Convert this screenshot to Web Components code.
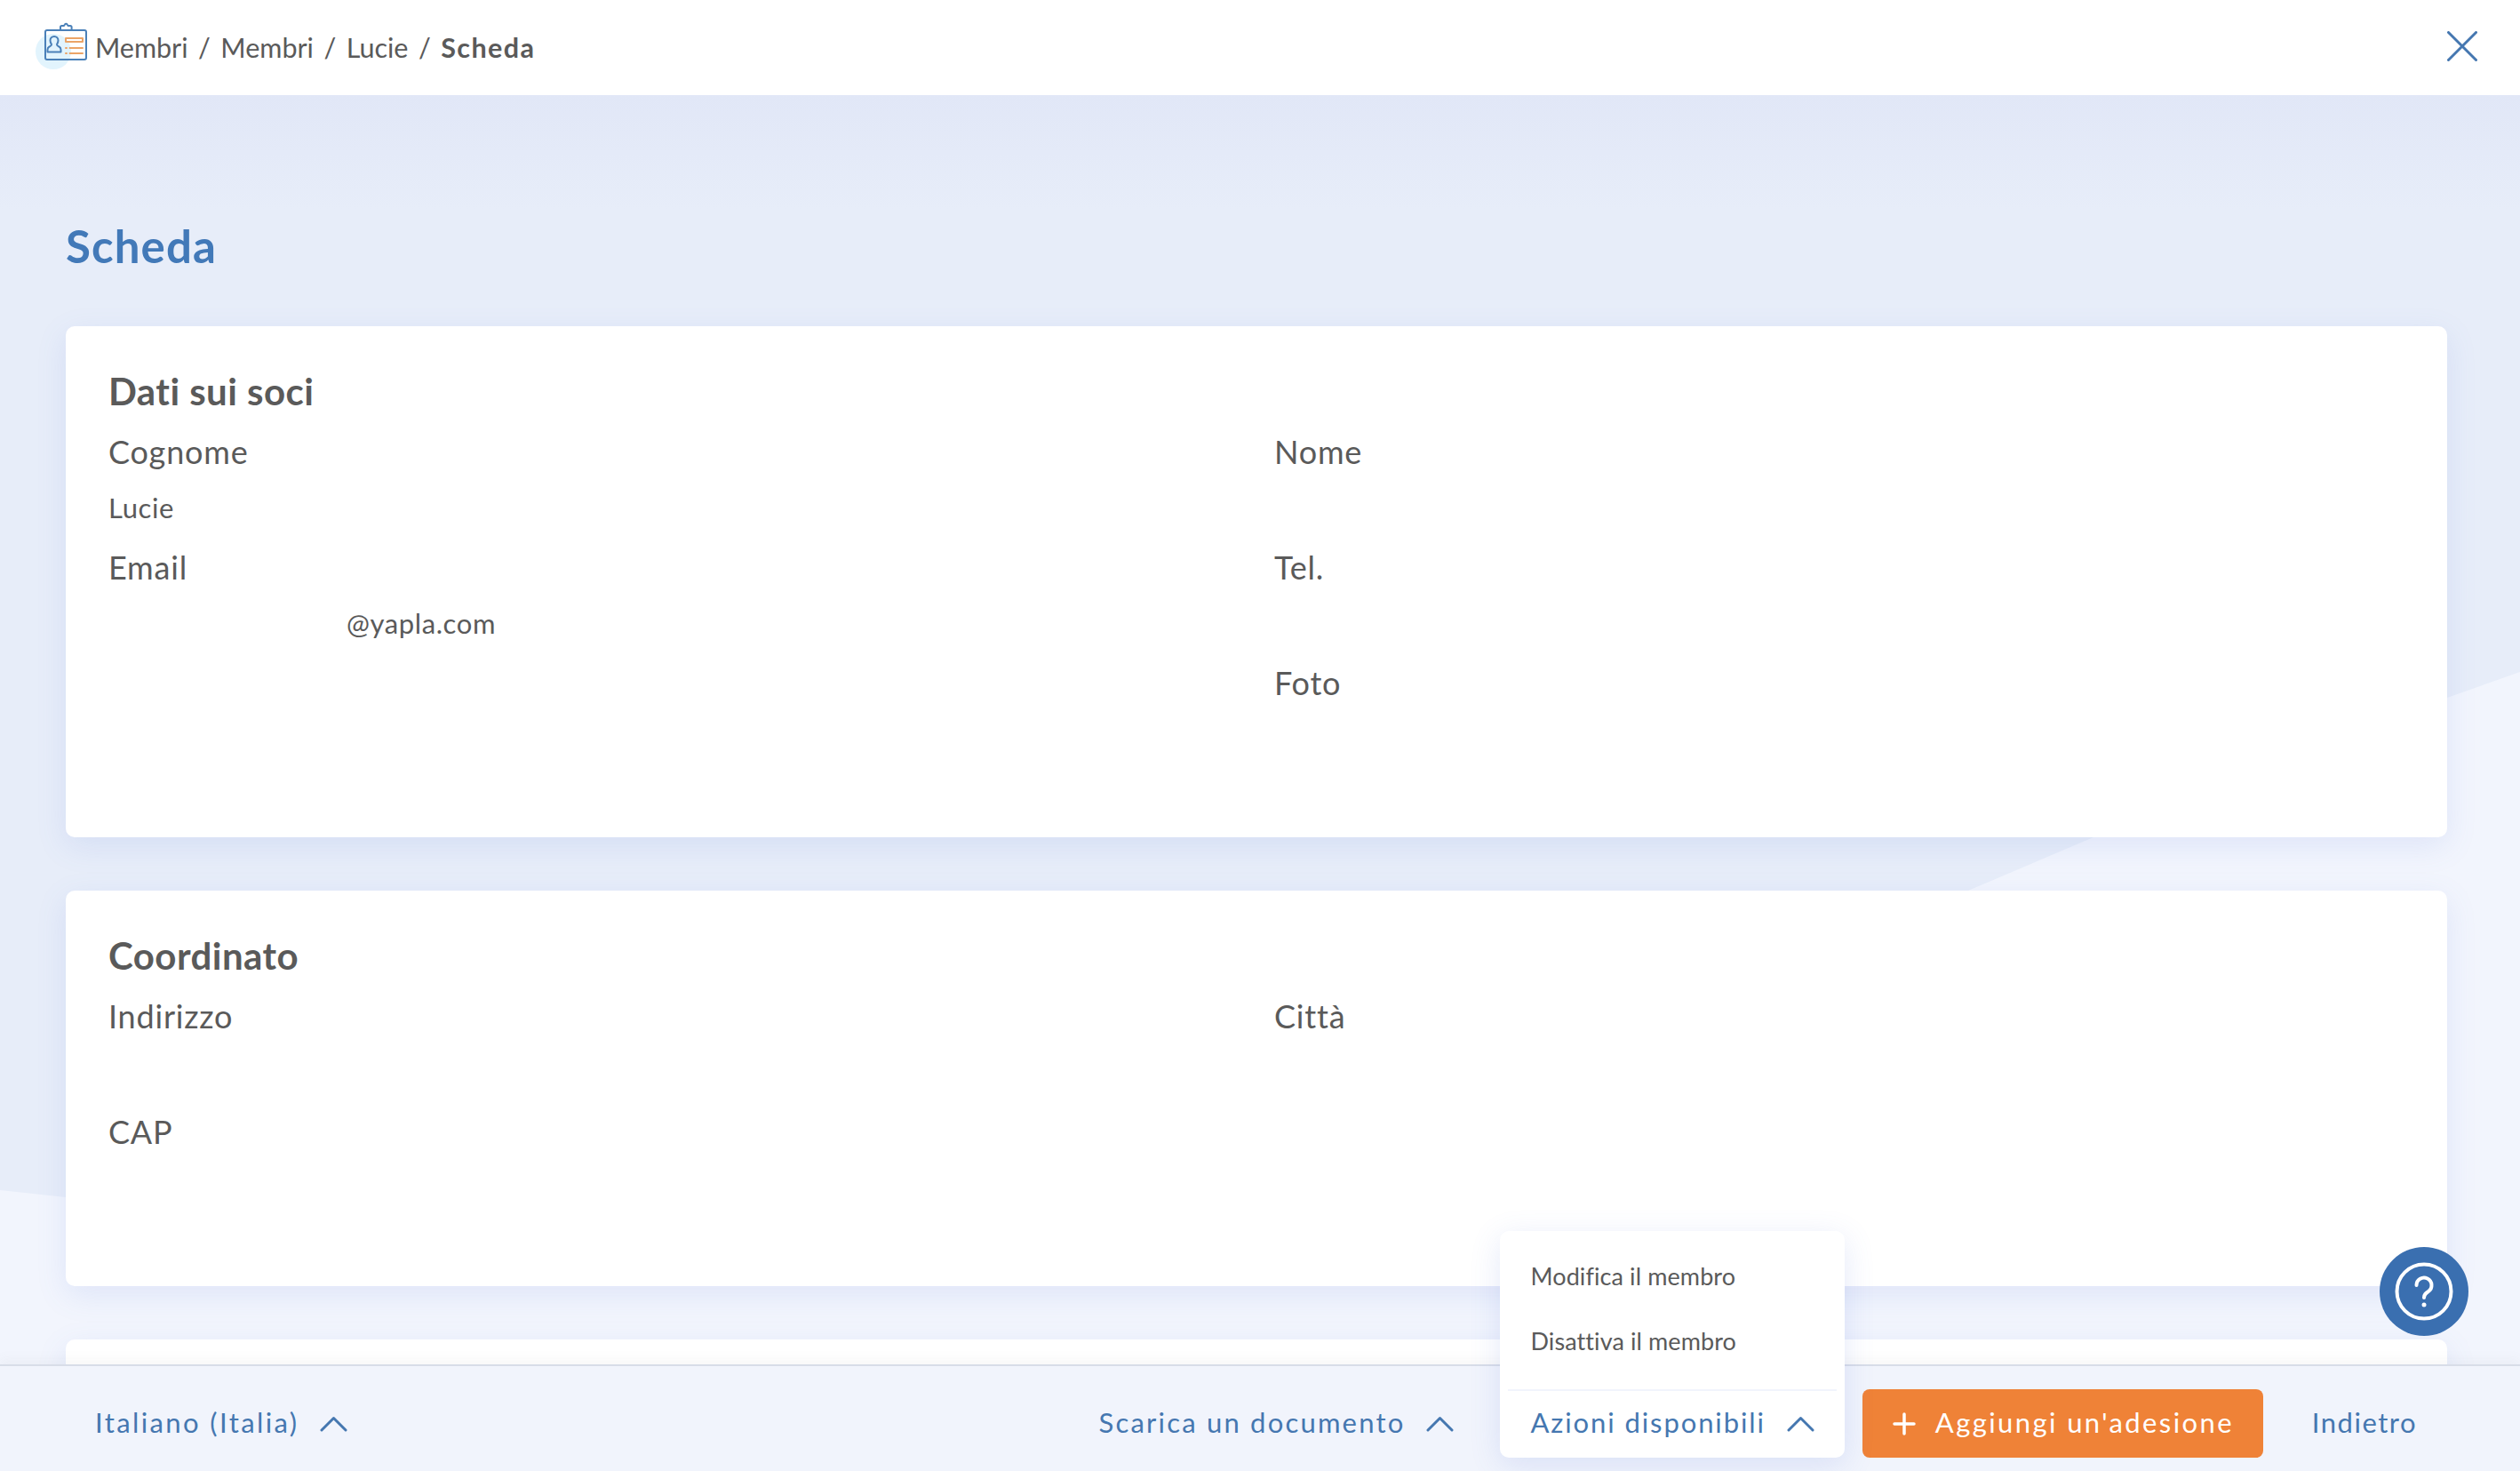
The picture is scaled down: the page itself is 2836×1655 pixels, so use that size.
<!DOCTYPE html>
<html lang="it">
<head>
<meta charset="utf-8">
<title>Scheda</title>
<style>
    html, body { margin: 0; height: 100%; overflow: hidden; }
    body { font-family: Lato, "Open Sans", sans-serif; color: #5a5a5a; }
</style>
</head>
<body>
<yp-app>
    <yp-topbar slot="top">
        <yp-crumb>Membri</yp-crumb>
        <yp-crumb>Membri</yp-crumb>
        <yp-crumb>Lucie</yp-crumb>
        <yp-crumb current>Scheda</yp-crumb>
    </yp-topbar>

    <yp-page heading="Scheda">
        <yp-card heading="Dati sui soci">
            <yp-field label="Cognome">Lucie</yp-field>
            <yp-field label="Nome"></yp-field>
            <yp-field label="Email" indent>@yapla.com</yp-field>
            <yp-field label="Tel."></yp-field>
            <yp-field label="Foto" second></yp-field>
        </yp-card>
        <yp-card heading="Coordinato">
            <yp-field label="Indirizzo"></yp-field>
            <yp-field label="Città"></yp-field>
            <yp-field label="CAP"></yp-field>
        </yp-card>
        <yp-card></yp-card>
    </yp-page>

    <yp-footer slot="bottom">
        <yp-action slot="start" style="--spacing: 2.4px">Italiano (Italia)</yp-action>
        <yp-action>Scarica un documento</yp-action>
        <yp-dropdown label="Azioni disponibili">
            <yp-menu-item>Modifica il membro</yp-menu-item>
            <yp-menu-item>Disattiva il membro</yp-menu-item>
        </yp-dropdown>
        <yp-button>Aggiungi un'adesione</yp-button>
        <yp-action plain style="--spacing: 1.5px">Indietro</yp-action>
    </yp-footer>

    <yp-help slot="over"></yp-help>
</yp-app>

<script>
// Small helper, every element below just hands over its shadow markup.
class ShadowElement extends HTMLElement {
    constructor() {
        super();
        this.attachShadow({ mode: "open" });
    }

    connectedCallback() {
        this.shadowRoot.innerHTML = this.markup();
    }
}

const chevron = `<svg width="31" height="18" viewBox="0 0 31 18" fill="none" stroke="currentColor" stroke-width="3" stroke-linecap="round" stroke-linejoin="round"><path d="M2 16 15.5 2.5 29 16"/></svg>`;

class YpApp extends ShadowElement {
    markup() {
        return `
            <style>
                :host { display: grid; grid-template-rows: 107px 1fr 120px; height: 1655px; position: relative; overflow: hidden; }
                .main { min-height: 0; overflow: hidden; position: relative; }
            </style>
            <slot name="top"></slot>
            <div class="main"><slot></slot></div>
            <slot name="bottom"></slot>
            <slot name="over"></slot>
        `;
    }
}

class YpTopbar extends ShadowElement {
    markup() {
        return `
            <style>
                :host { display: flex; align-items: center; background: #fff; height: 107px; padding: 0 48px 0 30px; box-sizing: border-box; position: relative; z-index: 1; }
                svg.logo { flex: none; width: 70px; height: 56px; margin-right: 7px; margin-top: -2px; }
                .crumbs { display: flex; align-items: center; font-size: 30.5px; line-height: 36px; margin-top: -1px; }
                .close { margin-left: auto; width: 34px; height: 34px; flex: none; margin-top: -4px; }
            </style>
            <svg class="logo" viewBox="30 25 70 56" fill="none" stroke-linecap="round" stroke-linejoin="round">
                <circle cx="60" cy="58" r="20" fill="#e2f4fd"/>
                <g stroke="#4a80b8" stroke-width="2">
                    <rect x="51" y="34" width="46" height="33" rx="2"/>
                    <path d="M68 34v-3.500a1.500 1.500 0 0 1 1.500-1.500h2.500l1-1.500a1.500 1.500 0 0 1 2.600 0l1 1.500h2.500a1.500 1.500 0 0 1 1.500 1.500v3.500"/>
                    <path d="M61 41a4.500 4.500 0 0 1 4.500 4.500c0 2-1 3.500-1.500 4.500 0 1.500 1 1.800 2.500 2.500 1.500.7 2 2 2 3.500v2.500h-15v-2.500c0-1.500.5-2.800 2-3.500 1.500-.7 2.500-1 2.500-2.500-.5-1-1.500-2.500-1.500-4.500a4.500 4.500 0 0 1 4.500-4.500z"/>
                </g>
                <g stroke="#eba467" stroke-width="2">
                    <rect x="74" y="43" width="19" height="4"/>
                    <path d="M74 54h1M78.500 54H93M74 60h1M78.500 60H93"/>
                </g>
            </svg>
            <div class="crumbs"><slot></slot></div>
            <svg class="close" viewBox="0 0 34 34" fill="none" stroke="#4577b0" stroke-width="3" stroke-linecap="round"><path d="M1.500 1.500 32.500 32.500M32.500 1.500 1.500 32.500"/></svg>
        `;
    }
}

class YpCrumb extends ShadowElement {
    markup() {
        const current = this.hasAttribute("current");
        return `
            <style>
                :host { display: inline-flex; font-weight: ${current ? 700 : 400}; letter-spacing: ${current ? 1.4 : 0}px; }
                .sep { margin: 0 11.5px; font-weight: 400; }
            </style>
            <slot></slot>${current ? "" : `<span class="sep">/</span>`}
        `;
    }
}

class YpPage extends ShadowElement {
    markup() {
        return `
            <style>
                :host { display: block; height: 100%; position: relative; background: linear-gradient(#e1e7f7 0, #e7edf9 130px); padding: 139px 82px 0 74px; box-sizing: border-box; }
                svg.bg { position: absolute; left: 0; top: 0; width: 2836px; height: 1548px; }
                h1 { position: relative; margin: 0 0 59px; font-size: 51px; line-height: 62px; font-weight: 700; letter-spacing: 1.1px; color: #4279b8; }
                .cards { position: relative; display: flex; flex-direction: column; gap: 60px; }
            </style>
            <svg class="bg" viewBox="0 107 2836 1548"><polygon points="0,1339 74,1347 1050,1440 2215,1002 2356,942 2754,785 2836,756 2836,1655 0,1655" fill="#f2f5fd"/></svg>
            <h1>${this.getAttribute("heading")}</h1>
            <div class="cards"><slot></slot></div>
        `;
    }
}

class YpCard extends ShadowElement {
    markup() {
        const heading = this.getAttribute("heading");
        return `
            <style>
                :host { display: block; background: #fff; border-radius: 10px; box-shadow: 0 10px 34px rgba(90, 120, 220, .13); padding: 49px 48px 65px; min-height: 100px; }
                h2 { margin: 0 0 23px; font-size: 42px; line-height: 48px; font-weight: 700; letter-spacing: .45px; }
                .grid { display: grid; grid-template-columns: 1312px 1fr; grid-auto-rows: 130px; }
            </style>
            ${heading ? `<h2>${heading}</h2>` : ""}
            <div class="grid"><slot></slot></div>
        `;
    }
}

class YpField extends ShadowElement {
    markup() {
        return `
            <style>
                :host { display: block; }
                :host([second]) { grid-column: 2; }
                .label { font-size: 36px; line-height: 43px; letter-spacing: .8px; }
                .value { font-size: 31px; line-height: 36px; margin-top: 23px; letter-spacing: .6px; }
                :host([indent]) .value { padding-left: 268px; }
            </style>
            <div class="label">${this.getAttribute("label")}</div>
            <div class="value"><slot></slot></div>
        `;
    }
}

class YpFooter extends ShadowElement {
    markup() {
        return `
            <style>
                :host { display: flex; align-items: center; box-sizing: border-box; height: 120px; padding: 27px 116px 16px 107px; background: #f1f4fc; border-top: 2px solid #d8dde8; box-shadow: 0 -6px 12px rgba(120, 120, 120, .05); position: relative; z-index: 2; }
                .right { margin-left: auto; display: flex; align-items: center; }
                ::slotted(yp-dropdown) { margin: 0 54px 0 86px; }
                ::slotted(yp-button) { margin-right: 55px; }
            </style>
            <slot name="start"></slot>
            <div class="right"><slot></slot></div>
        `;
    }
}

class YpAction extends ShadowElement {
    markup() {
        return `
            <style>
                :host { display: inline-flex; align-items: center; gap: 24px; color: #4577b0; font-size: 31px; line-height: 40px; letter-spacing: var(--spacing, 2.2px); white-space: nowrap; }
                span { margin-top: -3px; }
            </style>
            <span><slot></slot></span>${this.hasAttribute("plain") ? "" : chevron}
        `;
    }
}

class YpDropdown extends ShadowElement {
    markup() {
        return `
            <style>
                :host { display: inline-flex; align-items: center; position: relative; height: 77px; color: #4577b0; font-size: 31px; letter-spacing: 1.9px; white-space: nowrap; }
                .panel { position: absolute; left: -34px; width: 388px; bottom: 0; height: 255px; box-sizing: border-box; padding-top: 14px; background: #fff; border-radius: 10px; box-shadow: 0 8px 34px rgba(90, 120, 220, .16); letter-spacing: 0; }
                .items { height: 164px; padding-left: 34px; }
                hr { margin: 0 9px; border: 0; border-top: 2px solid #f1f4fc; }
                .trigger { position: relative; display: inline-flex; align-items: center; gap: 24px; }
                .trigger span { margin-top: -3px; }
            </style>
            <div class="panel">
                <div class="items"><slot></slot></div>
                <hr>
            </div>
            <span class="trigger"><span>${this.getAttribute("label")}</span>${chevron}</span>
        `;
    }
}

class YpMenuItem extends ShadowElement {
    markup() {
        return `
            <style>
                :host { display: block; height: 73px; font-size: 27px; line-height: 73px; letter-spacing: .1px; color: #5a5a5a; }
            </style>
            <slot></slot>
        `;
    }
}

class YpButton extends ShadowElement {
    markup() {
        return `
            <style>
                :host { display: inline-flex; align-items: center; gap: 22px; box-sizing: border-box; width: 451px; height: 77px; padding-left: 34px; background: #ef8237; border-radius: 8px; color: #fff; font-size: 31px; letter-spacing: 2.4px; white-space: nowrap; }
                span { margin-top: -3px; }
            </style>
            <svg width="26" height="26" viewBox="0 0 26 26" fill="none" stroke="#fff" stroke-width="3.500" stroke-linecap="round"><path d="M13 2v22M2 13h22"/></svg>
            <span><slot></slot></span>
        `;
    }
}

class YpHelp extends ShadowElement {
    markup() {
        return `
            <style>
                :host { position: absolute; left: 2678px; top: 1403px; width: 100px; height: 100px; border-radius: 50%; background: #3a6fb0; z-index: 1; display: flex; align-items: center; justify-content: center; }
            </style>
            <svg width="66" height="66" viewBox="0 0 66 66" fill="none" stroke="#fff" stroke-width="4" stroke-linecap="round">
                <circle cx="33" cy="33" r="30.500"/>
                <path d="M24.500 26a8.500 8.500 0 1 1 13.500 6.900c-3 2.100-5 3.500-5 7.100"/>
                <circle cx="33" cy="48" r="2.500" fill="#fff" stroke="none"/>
            </svg>
        `;
    }
}

customElements.define("yp-app", YpApp);
customElements.define("yp-topbar", YpTopbar);
customElements.define("yp-crumb", YpCrumb);
customElements.define("yp-page", YpPage);
customElements.define("yp-card", YpCard);
customElements.define("yp-field", YpField);
customElements.define("yp-footer", YpFooter);
customElements.define("yp-action", YpAction);
customElements.define("yp-dropdown", YpDropdown);
customElements.define("yp-menu-item", YpMenuItem);
customElements.define("yp-button", YpButton);
customElements.define("yp-help", YpHelp);
</script>
</body>
</html>
